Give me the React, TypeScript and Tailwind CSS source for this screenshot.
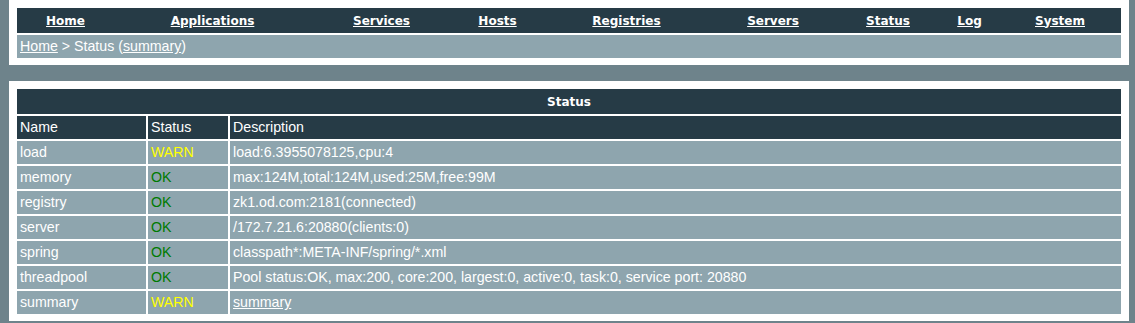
import React from 'react';

const NAV = ['Home', 'Applications', 'Services', 'Hosts', 'Registries', 'Servers', 'Status', 'Log', 'System'];

type Row = { name: string; status: 'OK' | 'WARN'; desc: string; link?: boolean };

const ROWS: Row[] = [
  { name: 'load', status: 'WARN', desc: 'load:6.3955078125,cpu:4' },
  { name: 'memory', status: 'OK', desc: 'max:124M,total:124M,used:25M,free:99M' },
  { name: 'registry', status: 'OK', desc: 'zk1.od.com:2181(connected)' },
  { name: 'server', status: 'OK', desc: '/172.7.21.6:20880(clients:0)' },
  { name: 'spring', status: 'OK', desc: 'classpath*:META-INF/spring/*.xml' },
  {
    name: 'threadpool',
    status: 'OK',
    desc: 'Pool status:OK, max:200, core:200, largest:0, active:0, task:0, service port: 20880',
  },
  { name: 'summary', status: 'WARN', desc: 'summary', link: true },
];

const sans = "font-['Liberation_Sans',Arial,sans-serif]";
const bold = "font-['DejaVu_Sans',Verdana,sans-serif] font-bold text-[12px]";
const cell = 'flex items-center px-[3px] pt-px';

export default function App() {
  return (
    <div className={`min-h-screen bg-[#6e838b] pl-[9px] pr-[6px] ${sans}`}>
      {/* Top menu panel */}
      <div className="bg-white px-[8px] pt-[8px] pb-[7px]">
        <div className="grid h-[25px] grid-cols-[97px_197px_141px_91px_167px_126px_104px_59px_1fr] items-center bg-[#263b46]">
          {NAV.map((label) => (
            <a key={label} href="#" className={`${bold} text-center text-white underline`}>
              {label}
            </a>
          ))}
        </div>
        <div className={`mt-[2px] h-[23px] bg-[#8ea5ae] text-[14.2px] text-white ${cell}`}>
          <a href="#" className="underline">Home</a>
          <span>&nbsp;&gt; Status (</span>
          <a href="#" className="underline">summary</a>
          <span>)</span>
        </div>
      </div>

      {/* Status panel */}
      <div className="mt-[16px] bg-white px-[8px] pt-[8px] pb-[7px]">
        <div className="flex flex-col gap-[2px] text-[14.2px] text-white">
          <div className={`flex h-[25px] items-center justify-center bg-[#263b46] ${bold}`}>Status</div>
          <div className="grid h-[23px] grid-cols-[129px_80px_1fr] gap-[2px]">
            <div className={`${cell} bg-[#263b46]`}>Name</div>
            <div className={`${cell} bg-[#263b46]`}>Status</div>
            <div className={`${cell} bg-[#263b46]`}>Description</div>
          </div>
          {ROWS.map((r) => (
            <div key={r.name} className="grid h-[23px] grid-cols-[129px_80px_1fr] gap-[2px]">
              <div className={`${cell} bg-[#8ea5ae]`}>{r.name}</div>
              <div
                className={`${cell} bg-[#8ea5ae] ${
                  r.status === 'WARN' ? 'text-[#ffff00]' : 'text-[#007a00]'
                }`}
              >
                {r.status}
              </div>
              <div className={`${cell} bg-[#8ea5ae]`}>
                {r.link ? (
                  <a href="#" className="underline">{r.desc}</a>
                ) : (
                  r.desc
                )}
              </div>
            </div>
          ))}
        </div>
      </div>
    </div>
  );
}
